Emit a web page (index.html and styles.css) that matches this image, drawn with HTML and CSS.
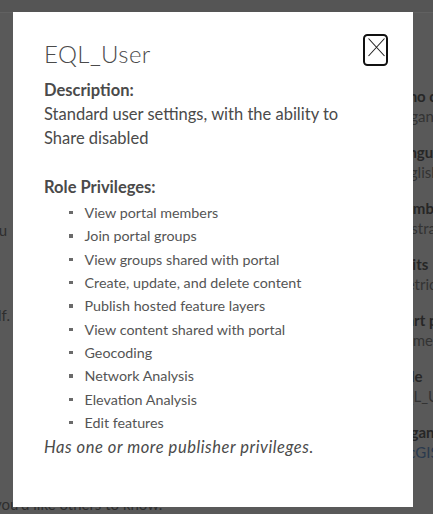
FILE: index.html
```html
<!DOCTYPE html>
<html lang="en">
<head>
<meta charset="utf-8">
<title>EQL_User</title>
<link rel="stylesheet" href="styles.css">
</head>
<body>
<div class="page">
  <div class="topbar"></div>
  <div class="content">
    <div class="left">
      <div class="clip l1"><span>Tell us a little about you</span></div>
      <div class="clip l2"><span>something about yourself.</span></div>
      <div class="l3"><span>you'd like others to know.</span></div>
    </div>
    <div class="right">
      <dl class="fields">
        <dt>Who can see your profile?</dt><dd>Organization</dd>
        <dt>Language</dt><dd>English</dd>
        <dt>Number format</dt><dd>Australia</dd>
        <dt>Units</dt><dd>Metric</dd>
        <dt>Start page</dt><dd>Home</dd>
        <dt>Role</dt><dd class="u">EQL_User</dd>
        <dt>Organization</dt><dd class="link">ArcGIS</dd>
      </dl>
    </div>
  </div>
</div>

<div class="modal" role="dialog" aria-labelledby="modal-title">
  <div class="modal-head">
    <h1 id="modal-title">EQL_User</h1>
    <button class="close" aria-label="Close">
      <svg width="25" height="32" viewBox="0 0 25 32" aria-hidden="true">
        <rect x="1" y="1" width="23" height="30" rx="3.5" ry="3.5" fill="none" stroke="#111" stroke-width="2"/>
        <path d="M5.5 4.5 L21.5 22 M21.5 4.5 L5.5 22" stroke="#222" stroke-width="1.1" fill="none"/>
      </svg>
    </button>
  </div>
  <h2 class="label">Description:</h2>
  <p class="desc">Standard user settings, with the ability to<br>Share disabled</p>
  <h2 class="label privs">Role Privileges:</h2>
  <ul class="priv-list">
    <li>View portal members</li>
    <li>Join portal groups</li>
    <li>View groups shared with portal</li>
    <li>Create, update, and delete content</li>
    <li>Publish hosted feature layers</li>
    <li>View content shared with portal</li>
    <li>Geocoding</li>
    <li>Network Analysis</li>
    <li>Elevation Analysis</li>
    <li>Edit features</li>
  </ul>
  <p class="note">Has one or more publisher privileges.</p>
</div>
</body>
</html>
```

FILE: styles.css
```css
* { box-sizing: border-box; }

html, body {
  margin: 0;
  padding: 0;
}

body {
  width: 433px;
  height: 514px;
  overflow: hidden;
  background: #595959;
  font-family: Lato, "Open Sans", sans-serif;
  position: relative;
}

.page {
  height: 514px;
  display: flex;
  flex-direction: column;
}

.topbar {
  height: 13px;
  background: #555555;
  border-bottom: 1px solid #616161;
}

.content {
  flex: 1;
  display: flex;
  justify-content: space-between;
}

.left {
  width: 13px;
  display: flex;
  flex-direction: column;
  color: #2e2e2e;
  font-size: 15px;
  line-height: 20px;
}

.clip {
  display: flex;
  justify-content: flex-end;
  overflow: hidden;
  white-space: nowrap;
}

.clip span { flex: none; padding-right: 6px; }
.l1 { margin-top: 207px; }
.l2 { margin-top: 65px; }
.l2 span { padding-right: 3px; }
.l3 {
  margin-top: 169px;
  width: 200px;
  white-space: nowrap;
}
.l3 span { display: inline-block; margin-left: -6px; }

.right {
  width: 40px;
  overflow: hidden;
  white-space: nowrap;
}

.fields {
  margin: 74px 0 0 0;
  font-size: 15px;
  line-height: 19px;
}

.fields dt {
  font-weight: 700;
  color: #262626;
  margin: 0;
}

.fields dd {
  margin: 1px 0 17px 0;
  color: #333333;
}

.fields dd.link { color: #2a3a4e; }

.modal {
  position: absolute;
  left: 13px;
  top: 12px;
  width: 400px;
  height: 495px;
  background: #ffffff;
  padding: 22px 25px 0 31px;
  color: #4a4a4a;
}

.modal-head {
  display: flex;
  justify-content: space-between;
  align-items: flex-start;
}

.modal-head h1 {
  margin: 6px 0 0 0;
  font-weight: 300;
  font-size: 24px;
  line-height: 28px;
  letter-spacing: 0.4px;
  color: #4a4a4a;
}

.close {
  width: 25px;
  height: 32px;
  padding: 0;
  border: 0;
  background: none;
  display: block;
}

.close svg { display: block; }

.label {
  margin: 10px 0 0 0;
  font-size: 16.5px;
  font-weight: 700;
  line-height: 24px;
  color: #4a4a4a;
}

.desc {
  margin: 0;
  font-size: 16.5px;
  line-height: 24px;
  color: #4a4a4a;
}

.label.privs { margin-top: 25px; }

.priv-list {
  margin: 2px 0 0 0;
  padding: 0 0 0 40px;
  font-size: 14.3px;
  line-height: 23.33px;
  color: #555555;
  list-style: none;
}

.priv-list li {
  display: flex;
  align-items: center;
}

.priv-list li::before {
  content: "";
  width: 3.5px;
  height: 3.5px;
  background: #6a6a6a;
  margin: 0 12px 0 -15px;
  flex: none;
}

.note {
  margin: 1px 0 0 0;
  font-size: 16.5px;
  font-style: italic;
  line-height: 24px;
  color: #4a4a4a;
  letter-spacing: 0.55px;
}
```
